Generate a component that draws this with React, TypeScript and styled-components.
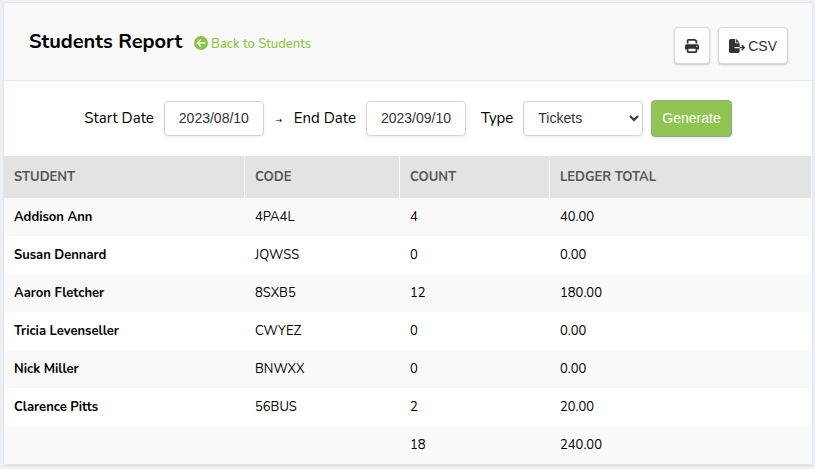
import React from "react";
import styled, { createGlobalStyle } from "styled-components";
import { FaCircleArrowLeft, FaFileExport, FaPrint } from "react-icons/fa6";

const GlobalStyle = createGlobalStyle`
  * { box-sizing: border-box; }
  body {
    margin: 0;
    background: #eeeff0;
    color: #000;
    font-family: Nunito, Lato, sans-serif;
    font-size: 13px;
  }
`;

const Card = styled.main`
  margin: 3px 3px 4px 4px;
  background: #fff;
  border-radius: 4px 4px 0 0;
  box-shadow: 0 0 0 1px #e1e7ee, 0 1px 2px rgba(0, 0, 0, 0.25);
  overflow: hidden;
`;

const Header = styled.header`
  display: flex;
  align-items: center;
  justify-content: space-between;
  height: 78px;
  padding: 7px 24px 0 25px;
  background: #f9f9f9;
  border-bottom: 1px solid #dfe6ee;
`;

const Heading = styled.div`
  display: flex;
  align-items: baseline;
  gap: 12px;
  padding-bottom: 6px;
`;

const Title = styled.h1`
  margin: 0;
  font-size: 20px;
  line-height: 28px;
  font-weight: 700;
`;

const BackLink = styled.a`
  color: #8bc34a;
  font-size: 13px;
  font-weight: 500;
  text-decoration: none;

  svg {
    margin-right: 3px;
    vertical-align: -2px;
  }
`;

const Actions = styled.div`
  display: flex;
  gap: 8px;
`;

const ToolButton = styled.button`
  display: inline-flex;
  align-items: center;
  justify-content: center;
  gap: 3px;
  height: 37px;
  padding: 1px 10px 0;
  border: 1px solid #d9d9d9;
  border-radius: 4px;
  background: #fff;
  box-shadow: 0 1px 2px rgba(0, 0, 0, 0.2);
  color: #333;
  font: 14px "Liberation Sans", Arial, sans-serif;
`;

const Filters = styled.form`
  display: flex;
  align-items: center;
  justify-content: center;
  height: 75px;
  padding-bottom: 1px;
  gap: 8px;
`;

const Field = styled.label`
  display: flex;
  align-items: center;
  gap: 10px;
  font-size: 15px;
`;

const TypeField = styled(Field)`
  margin-left: 7px;
`;

const DateInput = styled.input`
  width: 100px;
  height: 35px;
  padding: 0 14px;
  border: 1px solid #d3d3d3;
  border-radius: 4px;
  background: #fff;
  box-shadow: 0 1px 3px rgba(0, 0, 0, 0.08);
  color: #333;
  font: 14px "Liberation Sans", Arial, sans-serif;
`;

const TypeSelect = styled.select`
  width: 120px;
  height: 35px;
  padding: 0 0 0 10px;
  border: 1px solid #d3d3d3;
  border-radius: 4px;
  background: #fff;
  box-shadow: 0 1px 3px rgba(0, 0, 0, 0.08);
  color: #333;
  font: 14px "Liberation Sans", Arial, sans-serif;
`;

const Arrow = styled.span`
  width: 14px;
  padding-top: 5px;
  font: 8px "DejaVu Sans", sans-serif;
  text-align: center;
`;

const GenerateButton = styled.button`
  height: 37px;
  padding: 0 10px;
  border: 1px solid #95a39b;
  border-radius: 4px;
  background: #90c551;
  box-shadow: 0 1px 3px rgba(0, 0, 0, 0.12);
  color: #fff;
  font: 14px "Liberation Sans", Arial, sans-serif;
`;

const Table = styled.table`
  width: 100%;
  table-layout: fixed;
  border-collapse: separate;
  border-spacing: 0;
`;

const HeadCell = styled.th<{ $width?: number }>`
  width: ${(p) => (p.$width ? `${p.$width}px` : "auto")};
  height: 42px;
  padding: 0 10px 1px;
  border-right: 1px solid #fff;
  background: #e3e3e3;
  color: #555;
  font-weight: 700;
  text-align: left;
`;

const Row = styled.tr`
  height: 38px;
  &:nth-child(odd) { background: #f9f9f9; }
`;

const Cell = styled.td`
  padding: 0 10px 1px;
`;

const NameCell = styled.th`
  padding: 0 10px 1px;
  font-weight: 700;
  text-align: left;
`;

const students = [
  ["Addison Ann", "4PA4L", "4", "40.00"],
  ["Susan Dennard", "JQWSS", "0", "0.00"],
  ["Aaron Fletcher", "8SXB5", "12", "180.00"],
  ["Tricia Levenseller", "CWYEZ", "0", "0.00"],
  ["Nick Miller", "BNWXX", "0", "0.00"],
  ["Clarence Pitts", "56BUS", "2", "20.00"],
];

export default function App() {
  return (
    <>
      <GlobalStyle />
      <Card>
        <Header>
          <Heading>
            <Title>Students Report</Title>
            <BackLink href="#students">
              <FaCircleArrowLeft size={14} />
              Back to Students
            </BackLink>
          </Heading>
          <Actions>
            <ToolButton type="button" aria-label="Print">
              <FaPrint size={14} />
            </ToolButton>
            <ToolButton type="button">
              <FaFileExport size={16} />
              CSV
            </ToolButton>
          </Actions>
        </Header>
        <Filters onSubmit={(e) => e.preventDefault()}>
          <Field>
            Start Date
            <DateInput type="text" defaultValue="2023/08/10" />
          </Field>
          <Arrow>→</Arrow>
          <Field>
            End Date
            <DateInput type="text" defaultValue="2023/09/10" />
          </Field>
          <TypeField>
            Type
            <TypeSelect defaultValue="Tickets">
              <option>Tickets</option>
            </TypeSelect>
          </TypeField>
          <GenerateButton type="submit">Generate</GenerateButton>
        </Filters>
        <Table>
          <thead>
            <tr>
              <HeadCell scope="col" $width={241}>STUDENT</HeadCell>
              <HeadCell scope="col" $width={155}>CODE</HeadCell>
              <HeadCell scope="col" $width={150}>COUNT</HeadCell>
              <HeadCell scope="col">LEDGER TOTAL</HeadCell>
            </tr>
          </thead>
          <tbody>
            {students.map(([name, code, count, total]) => (
              <Row key={code}>
                <NameCell scope="row">{name}</NameCell>
                <Cell>{code}</Cell>
                <Cell>{count}</Cell>
                <Cell>{total}</Cell>
              </Row>
            ))}
            <Row>
              <Cell />
              <Cell />
              <Cell>18</Cell>
              <Cell>240.00</Cell>
            </Row>
          </tbody>
        </Table>
      </Card>
    </>
  );
}
